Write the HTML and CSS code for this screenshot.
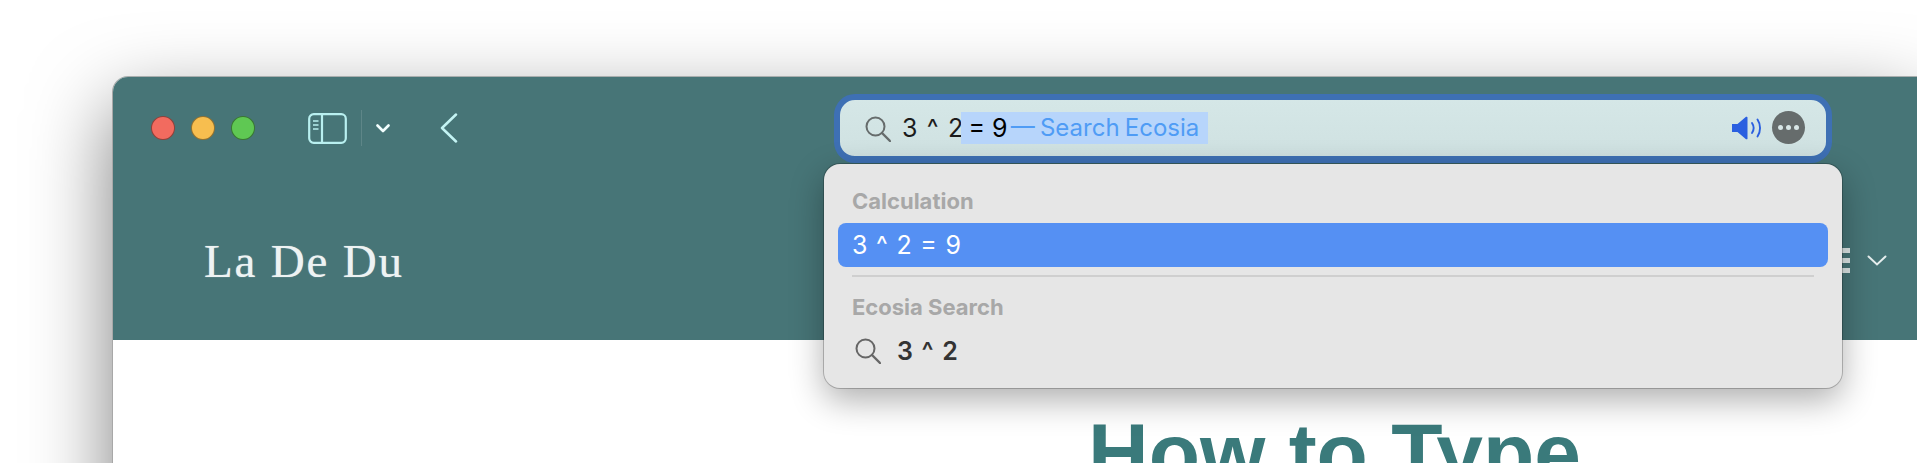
FILE: index.html
```html
<!DOCTYPE html>
<html lang="en">
<head>
<meta charset="utf-8">
<title>How to Type</title>
<link rel="stylesheet" href="styles.css">
</head>
<body>
<div class="window">
  <header class="site-header">
    <div class="toolbar">
      <div class="lights">
        <span class="light light-red"></span>
        <span class="light light-yellow"></span>
        <span class="light light-green"></span>
      </div>
      <svg class="sidebar-icon" width="39" height="31" viewBox="0 0 39 31" fill="none" stroke="#b9f0f0" stroke-width="2.2">
        <rect x="1.2" y="1.2" width="36.6" height="28.6" rx="4.5"/>
        <path d="M14 1.2V29.8"/>
        <path d="M5 8h5.5M5 12h5.5M5 16h5.5" stroke-width="1.7"/>
      </svg>
      <span class="tool-divider"></span>
      <svg class="small-chevron" width="14" height="9" viewBox="0 0 14 9" fill="none" stroke="#f2ffff" stroke-width="2.6" stroke-linecap="round" stroke-linejoin="round">
        <path d="M1.5 1.5 7 7l5.5-5.5"/>
      </svg>
      <svg class="back-chevron" width="18" height="30" viewBox="0 0 18 30" fill="none" stroke="#c4f4f4" stroke-width="2.5" stroke-linecap="round" stroke-linejoin="round">
        <path d="M16 1.5 2 15l14 13.5"/>
      </svg>
      <div class="urlbar">
        <svg class="search-icon" width="26" height="26" viewBox="0 0 26 26" fill="none" stroke="#666c6c" stroke-width="2">
          <circle cx="10.5" cy="10.5" r="9"/>
          <path d="m17 17 8 8" stroke-linecap="round" stroke-width="2.4"/>
        </svg>
        <span class="query">3 ^ 2</span><span class="selection"><span class="completion">&nbsp;= 9</span><span class="hint"> — Search Ecosia</span></span>
        <svg class="speaker" width="30" height="24" viewBox="0 0 30 24">
          <path d="M0 8h5.5L14 .8c.6-.4 1.5 0 1.5.8v20.8c0 .8-.9 1.2-1.5.8L5.500 16H0z" fill="#2a5fe0"/>
          <path d="M20 7c2 3 2 7 0 10M25.500 3.500c3.400 5 3.400 12 0 17" fill="none" stroke="#2a5fe0" stroke-width="1.900" stroke-linecap="round"/>
        </svg>
        <span class="more"><i></i><i></i><i></i></span>
        <div class="dropdown">
          <div class="label">Calculation</div>
          <div class="result selected">3 ^ 2 = 9</div>
          <div class="separator"></div>
          <div class="label label-second">Ecosia Search</div>
          <div class="result suggestion">
            <svg width="26" height="26" viewBox="0 0 26 26" fill="none" stroke="#666" stroke-width="2">
              <circle cx="10.500" cy="10.500" r="9"/>
              <path d="m17 17 8 8" stroke-linecap="round" stroke-width="2.400"/>
            </svg>
            <span>3 ^ 2</span>
          </div>
        </div>
      </div>
    </div>
    <div class="brand-row">
      <div class="brand">La De Du</div>
      <div class="menu">
        <span class="hamburger"><i></i><i></i><i></i></span>
        <svg width="20" height="11" viewBox="0 0 20 11" fill="none" stroke="#e6eeee" stroke-width="2" stroke-linecap="round">
          <path d="M1.500 1.500 10 9.500l8.500-8"/>
        </svg>
      </div>
    </div>
  </header>
  <main class="content">
    <h1>How to Type</h1>
  </main>
</div>
</body>
</html>
```
FILE: styles.css
```css
* { box-sizing: border-box; }
html, body { margin: 0; height: 100%; background: #fff; overflow: hidden; }
body {
  padding: 76px 0 0 112px;
  font-family: Inter, "Liberation Sans", sans-serif;
}
.window {
  width: 1805px;
  height: 520px;
  background: #fff;
  border-top: 1px solid #a9aeae;
  border-left: 1px solid #a8a8a8;
  border-radius: 16px 0 0 0;
  box-shadow: 0 30px 80px rgba(0, 0, 0, 0.5);
}
.site-header {
  height: 263px;
  background: #477577;
  border-radius: 15px 0 0 0;
}
.toolbar {
  height: 102px;
  display: flex;
  align-items: center;
  padding-left: 38px;
}
.lights { display: flex; gap: 16px; }
.light {
  width: 24px;
  height: 24px;
  border-radius: 50%;
  border: 1px solid rgba(0, 0, 0, 0.4);
}
.light-red { background: #f26b5f; }
.light-yellow { background: #f7be4f; }
.light-green { background: #5fc853; }
.sidebar-icon { margin-left: 53px; flex: none; }
.tool-divider {
  width: 1px;
  height: 36px;
  margin-left: 14px;
  background: #5e8688;
}
.small-chevron { margin-left: 14px; flex: none; }
.back-chevron { margin-left: 50px; flex: none; }
.urlbar {
  position: relative;
  flex: none;
  width: 998px;
  height: 69px;
  margin-left: 376px;
  display: flex;
  align-items: center;
  padding-left: 25px;
  background: linear-gradient(#d5e7e7, #cfe1e1);
  border: 6px solid #3e70b4;
  border-bottom-width: 7px;
  border-radius: 21px;
  font-size: 25px;
  color: #1c1c1c;
}
.search-icon { flex: none; margin-right: 11px; margin-top: 2px; }
.query { word-spacing: 2.4px; white-space: pre; }
.selection {
  display: inline-flex;
  align-items: center;
  height: 32px;
  margin-left: -2px;
  padding-right: 9px;
  background: #b7d5fb;
  white-space: pre;
}
.completion { color: #000; word-spacing: 0; }
.hint { margin-left: -2px; font-size: 24px; color: #4f9cf5; word-spacing: -1.5px; }
.speaker { margin-left: auto; flex: none; }
.more {
  width: 33px;
  height: 33px;
  margin: 0 21px 0 10px;
  flex: none;
  display: flex;
  align-items: center;
  justify-content: center;
  gap: 3px;
  border-radius: 50%;
  background: #666c6c;
}
.more i {
  width: 5px;
  height: 5px;
  border-radius: 50%;
  background: #d8e6e6;
}
.dropdown {
  position: absolute;
  top: 64px;
  left: -16px;
  right: -16px;
  height: 224px;
  padding: 23px 14px 0;
  background: #e6e6e6;
  border-radius: 16px;
  box-shadow: 0 0 0 1px rgba(0, 0, 0, 0.22), 0 12px 34px rgba(0, 0, 0, 0.32);
  z-index: 2;
}
.label {
  height: 36px;
  padding-left: 14px;
  font-size: 22px;
  font-weight: 700;
  line-height: 29px;
  color: #a8a8a8;
}
.label-second { height: 37px; line-height: 30px; }
.result {
  height: 44px;
  display: flex;
  align-items: center;
  font-size: 25px;
  word-spacing: 1.6px;
}
.selected {
  padding-left: 14px;
  background: #5590f3;
  border-radius: 8px;
  color: #fff;
}
.separator {
  height: 2px;
  margin: 8px 14px 15px;
  background: #cfcfcf;
}
.suggestion {
  padding-left: 17px;
  gap: 16px;
  font-weight: 600;
  color: #333;
  word-spacing: 2.4px;
}
.brand-row {
  height: 161px;
  display: flex;
  justify-content: space-between;
  padding: 0 30px 0 91px;
}
.brand {
  margin-top: 54px;
  font-family: "Liberation Serif", serif;
  font-size: 47px;
  line-height: 56px;
  letter-spacing: 1.8px;
  color: #eef3f3;
  text-shadow: 0 0 1px rgba(238, 243, 243, 0.7);
}
.menu {
  display: flex;
  align-items: center;
  gap: 17px;
  height: 36px;
  margin-top: 63px;
}
.hamburger {
  display: flex;
  flex-direction: column;
  gap: 5px;
  width: 24px;
}
.hamburger i {
  height: 5px;
  background: #dfe8e8;
}
.content { padding: 65px 0 0 975px; }
h1 {
  margin: 0;
  font-family: "Liberation Sans", sans-serif;
  font-size: 84px;
  font-weight: 700;
  line-height: 96px;
  color: #3a7a7b;
  white-space: nowrap;
}
```
